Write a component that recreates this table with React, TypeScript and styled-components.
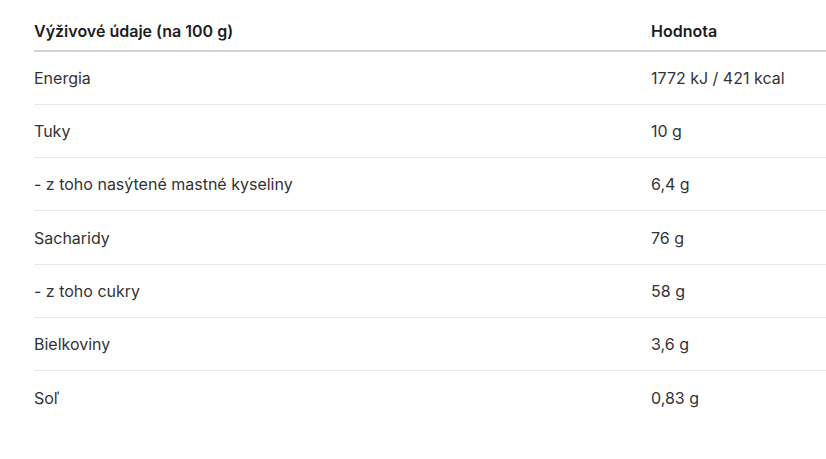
import React from 'react'
import styled, { createGlobalStyle } from 'styled-components'

const GlobalStyle = createGlobalStyle`
  html, body {
    margin: 0;
    padding: 0;
    background: #ffffff;
  }
  body {
    font-family: Inter, "Noto Sans", "Liberation Sans", sans-serif;
    -webkit-font-smoothing: antialiased;
  }
`

const Page = styled.div`
  padding: 13px 0 0 34px;
  width: 826px;
  box-sizing: border-box;
  overflow: hidden;
`

const Table = styled.table`
  width: 800px;
  border-collapse: collapse;
  table-layout: fixed;
`

const HeadCell = styled.th<{ $w?: number }>`
  text-align: left;
  font-size: 16px;
  font-weight: 600;
  color: #1d1d1f;
  line-height: 22px;
  height: 38px;
  padding: 0 0 2px;
  box-sizing: border-box;
  border-bottom: 2px solid #d2d2d4;
  width: ${(p) => (p.$w ? `${p.$w}px` : 'auto')};
`

const Row = styled.tr<{ $last?: boolean }>`
  border-bottom: ${(p) => (p.$last ? 'none' : '1px solid #e6e6e8')};
`

const Cell = styled.td`
  font-size: 16px;
  font-weight: 400;
  color: #333336;
  line-height: 22px;
  height: 53.33px;
  padding: 0;
  box-sizing: border-box;
  vertical-align: middle;
`

const rows: [string, string][] = [
  ['Energia', '1772 kJ / 421 kcal'],
  ['Tuky', '10 g'],
  ['- z toho nasýtené mastné kyseliny', '6,4 g'],
  ['Sacharidy', '76 g'],
  ['- z toho cukry', '58 g'],
  ['Bielkoviny', '3,6 g'],
  ['Soľ', '0,83 g'],
]

const App = () => {
  return <Page>
    <GlobalStyle />
    <Table>
      <thead>
        <tr>
          <HeadCell $w={617}>Výživové údaje (na 100 g)</HeadCell>
          <HeadCell>Hodnota</HeadCell>
        </tr>
      </thead>
      <tbody>
        {rows.map(([name, value], i) => (
          <Row key={name} $last={i === rows.length - 1}>
            <Cell>{name}</Cell>
            <Cell>{value}</Cell>
          </Row>
        ))}
      </tbody>
    </Table>
  </Page>
}

export default App
